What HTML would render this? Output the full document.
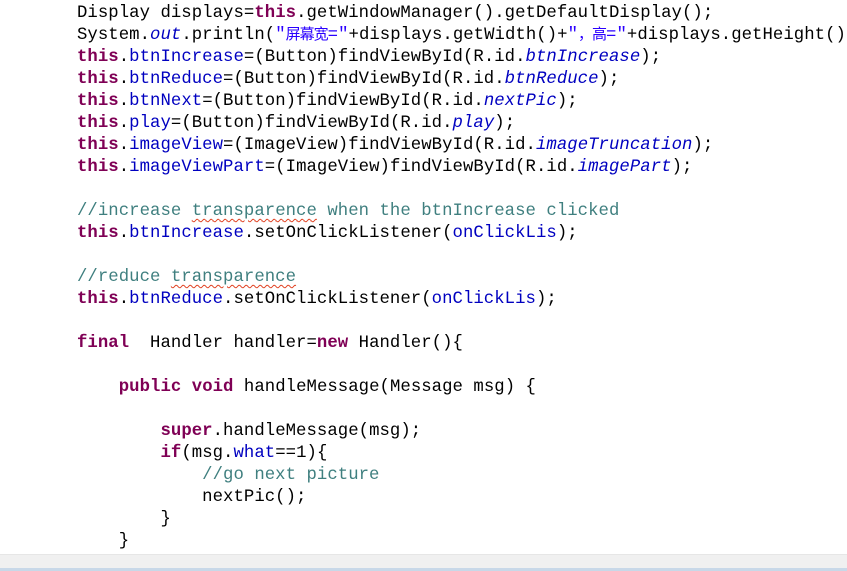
<!DOCTYPE html>
<html><head><meta charset="utf-8"><style>
html,body{margin:0;padding:0;background:#fff;width:847px;height:571px;overflow:hidden;}
pre{position:absolute;left:77px;top:3px;margin:0;font-family:"Liberation Mono","Noto Sans CJK SC",monospace;font-size:17.3px;line-height:22px;color:#000;letter-spacing:0.06px}
.k{color:#7f0055;font-weight:bold}
.f{color:#0000c0}
.i{color:#0000c0;font-style:italic}
.o{font-style:italic;color:#0000c0}
.s{color:#2a00ff}
.cj{font-size:15px;letter-spacing:-1px}
.c{color:#3f7f7f}
.w{text-decoration:underline wavy #e04020;text-decoration-thickness:1px;text-underline-offset:3px}
.sb{position:absolute;left:0;top:554px;width:847px;height:14px;background:#f0f0f0;border-top:1px solid #e6e6e6}
.sb2{position:absolute;left:0;top:568px;width:847px;height:3px;background:#c8d8e8}
</style></head><body>
<pre>Display displays=<span class="k">this</span>.getWindowManager().getDefaultDisplay();
System.<span class="o">out</span>.println(<span class="s">"<span class="cj">屏幕宽</span>="</span>+displays.getWidth()+<span class="s">"<span class="cj">，高</span>="</span>+displays.getHeight());
<span class="k">this</span>.<span class="f">btnIncrease</span>=(Button)findViewById(R.id.<span class="i">btnIncrease</span>);
<span class="k">this</span>.<span class="f">btnReduce</span>=(Button)findViewById(R.id.<span class="i">btnReduce</span>);
<span class="k">this</span>.<span class="f">btnNext</span>=(Button)findViewById(R.id.<span class="i">nextPic</span>);
<span class="k">this</span>.<span class="f">play</span>=(Button)findViewById(R.id.<span class="i">play</span>);
<span class="k">this</span>.<span class="f">imageView</span>=(ImageView)findViewById(R.id.<span class="i">imageTruncation</span>);
<span class="k">this</span>.<span class="f">imageViewPart</span>=(ImageView)findViewById(R.id.<span class="i">imagePart</span>);

<span class="c">//increase <span class="w">transparence</span> when the btnIncrease clicked</span>
<span class="k">this</span>.<span class="f">btnIncrease</span>.setOnClickListener(<span class="f">onClickLis</span>);

<span class="c">//reduce <span class="w">transparence</span></span>
<span class="k">this</span>.<span class="f">btnReduce</span>.setOnClickListener(<span class="f">onClickLis</span>);

<span class="k">final</span>  Handler handler=<span class="k">new</span> Handler(){

    <span class="k">public</span> <span class="k">void</span> handleMessage(Message msg) {

        <span class="k">super</span>.handleMessage(msg);
        <span class="k">if</span>(msg.<span class="f">what</span>==1){
            <span class="c">//go next picture</span>
            nextPic();
        }
    }</pre>
<div class="sb"></div><div class="sb2"></div>
</body></html>
